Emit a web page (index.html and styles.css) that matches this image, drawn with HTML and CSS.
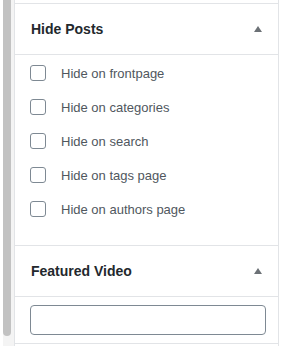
FILE: index.html
```html
<!DOCTYPE html>
<html>
<head>
<meta charset="utf-8">
<link rel="stylesheet" href="styles.css">
</head>
<body>
<div class="page">
  <div class="track"><div class="thumb"></div></div>
  <div class="sidebar">
    <div class="prev"></div>
    <section class="panel">
      <div class="panel-head">
        <h2 class="panel-title">Hide Posts</h2>
        <svg class="toggle" width="8" height="6" viewBox="0 0 8 6"><polygon points="4,0 8,6 0,6" fill="#6c7176"/></svg>
      </div>
      <div class="panel-body list">
        <label class="row"><span class="box"></span>Hide on frontpage</label>
        <label class="row"><span class="box"></span>Hide on categories</label>
        <label class="row"><span class="box"></span>Hide on search</label>
        <label class="row"><span class="box"></span>Hide on tags page</label>
        <label class="row"><span class="box"></span>Hide on authors page</label>
      </div>
    </section>
    <section class="panel">
      <div class="panel-head">
        <h2 class="panel-title">Featured Video</h2>
        <svg class="toggle" width="8" height="6" viewBox="0 0 8 6"><polygon points="4,0 8,6 0,6" fill="#6c7176"/></svg>
      </div>
      <div class="panel-body field">
        <div class="input"></div>
      </div>
    </section>
  </div>
</div>
</body>
</html>
```

FILE: styles.css
```css
html, body {
  margin: 0;
  padding: 0;
  background: #ffffff;
}
body {
  font-family: "Liberation Sans", Arial, sans-serif;
  width: 282px;
  height: 346px;
  overflow: hidden;
}
.page {
  display: flex;
  height: 346px;
}
.track {
  width: 14px;
  flex: none;
  background: linear-gradient(to right, #ffffff 0 3px, #f4f4f4 3px);
}
.thumb {
  margin-left: 3px;
  width: 8px;
  height: 336px;
  background: #c2c2c2;
  border-radius: 0 0 4px 4px;
}
.sidebar {
  width: 263px;
  flex: none;
  border-left: 1px solid #e2e4e7;
  border-right: 1px solid #e2e4e7;
  background: #fff;
}
.prev {
  height: 3px;
  border-bottom: 1px solid #e2e4e7;
}
.panel {
  border-bottom: 1px solid #e2e4e7;
}
.panel-head {
  height: 50px;
  display: flex;
  align-items: center;
  justify-content: space-between;
  padding: 0 16px;
  border-bottom: 1px solid #e2e4e7;
}
.panel-title {
  margin: 0;
  font-size: 14px;
  font-weight: bold;
  color: #23282d;
}
.toggle {
  display: block;
}
.list {
  padding: 10px 15px 28px;
  display: flex;
  flex-direction: column;
  gap: 18px;
}
.row {
  display: flex;
  align-items: center;
  font-size: 13px;
  color: #50575e;
  height: 16px;
}
.box {
  width: 16px;
  height: 16px;
  box-sizing: border-box;
  border: 1px solid #7e8993;
  border-radius: 3px;
  margin-right: 15px;
  flex: none;
}
.field {
  padding: 8px 15px;
}
.input {
  width: 236px;
  height: 30px;
  box-sizing: border-box;
  border: 1px solid #7e8993;
  border-radius: 4px;
}
```
